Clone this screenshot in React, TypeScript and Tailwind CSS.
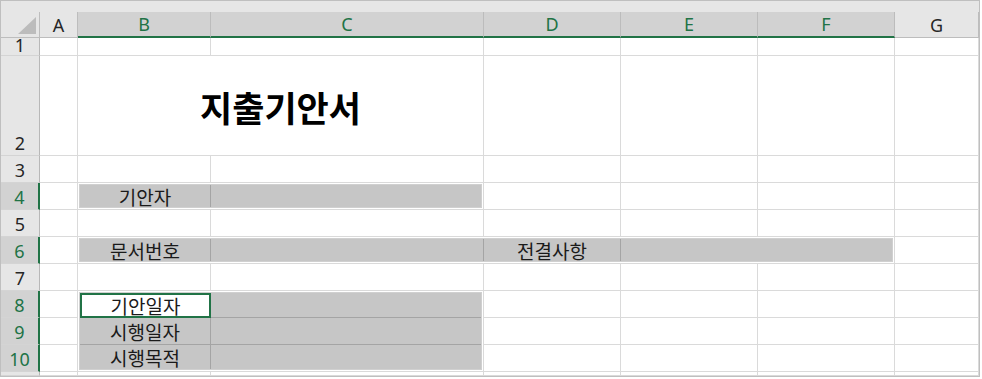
import clsx from "clsx"

const GREEN = "#217346"

// Columns A..G. Selected columns B..F.
const COLUMNS: { label: string; active: boolean }[] = [
  { label: "A", active: false },
  { label: "B", active: true },
  { label: "C", active: true },
  { label: "D", active: true },
  { label: "E", active: true },
  { label: "F", active: true },
  { label: "G", active: false },
]

function ColHead({ label, active }: { label: string; active: boolean }) {
  return (
    <div
      className={clsx(
        "flex items-center justify-center border-r text-[18px] leading-none",
        active
          ? "bg-[#d2d2d2] text-[#217346] border-b-2 border-b-[#217346] border-r-[#bcbcbc]"
          : "bg-[#e6e6e6] text-[#262626] border-b border-b-[#bdbdbd] border-r-[#bdbdbd]"
      )}
    >
      {label}
    </div>
  )
}

function RowHead({ n, active, pad = "pb-[3px]" }: { n?: string; active?: boolean; pad?: string }) {
  return (
    <div
      className={clsx(
        "flex items-end justify-center overflow-hidden border-b border-b-[#d4d4d4] text-[18px] leading-none",
        pad,
        active
          ? "bg-[#d2d2d2] text-[#217346] border-r-2 border-r-[#217346]"
          : "bg-[#e6e6e6] text-[#262626] border-r border-r-[#b8b8b8]"
      )}
    >
      {n}
    </div>
  )
}

function Cell({ className, children }: { className?: string; children?: React.ReactNode }) {
  return <div className={clsx("border-r border-b border-[#dadada]", className)}>{children}</div>
}

function Label({ children }: { children: React.ReactNode }) {
  return (
    <span className="font-['Noto_Sans_CJK_KR',sans-serif] text-[19px] leading-none text-[#1a1a1a]">
      {children}
    </span>
  )
}

export default function App() {
  return (
    <div className="w-[982px] h-[379px] bg-white font-['Noto_Sans','Noto_Sans_CJK_KR',sans-serif]">
      <div className="w-[980px] h-[377px] border border-[#bfbfbf] flex flex-col overflow-hidden">
        {/* strip above the column headers */}
        <div className="h-[11px] shrink-0 bg-[#e6e6e6]" />

        <div className="flex-1 grid grid-cols-[39px_38px_133px_273px_137px_137px_137px_1fr] grid-rows-[26px_18px_100px_repeat(8,27px)_1fr]">
          {/* header row */}
          <div className="flex items-end justify-end bg-[#e6e6e6] border-r border-b border-[#bdbdbd] pr-[3px] pb-[3px]">
            <svg width="18" height="17" viewBox="0 0 18 17">
              <polygon points="18,0 18,17 0,17" fill="#bcbcbc" />
            </svg>
          </div>
          {COLUMNS.map((c) => (
            <ColHead key={c.label} label={c.label} active={c.active} />
          ))}

          {/* row 1 (clipped) */}
          <RowHead n="1" pad="pb-[1px]" />
          <Cell />
          <Cell />
          <Cell />
          <Cell />
          <Cell />
          <Cell />
          <Cell />

          {/* row 2: title merged over B:C */}
          <RowHead n="2" />
          <Cell />
          <Cell className="col-span-2 flex items-center justify-center pt-[2px]">
            <span className="font-['Noto_Sans_CJK_KR',sans-serif] text-[35px] font-bold leading-none text-black">
              지출기안서
            </span>
          </Cell>
          <Cell />
          <Cell />
          <Cell />
          <Cell />

          {/* row 3 */}
          <RowHead n="3" />
          <Cell />
          <Cell />
          <Cell />
          <Cell />
          <Cell />
          <Cell />
          <Cell />

          {/* row 4: 기안자 */}
          <RowHead n="4" active />
          <Cell />
          <Cell className="col-span-2">
            <div className="h-full p-px bg-white">
              <div className="h-full flex border border-[#d0d0d0] bg-[#c6c6c6]">
                <div className="w-[131px] flex items-center justify-center border-r border-[#a4a4a4]">
                  <Label>기안자</Label>
                </div>
                <div className="flex-1" />
              </div>
            </div>
          </Cell>
          <Cell />
          <Cell />
          <Cell />
          <Cell />

          {/* row 5 */}
          <RowHead n="5" />
          <Cell />
          <Cell />
          <Cell />
          <Cell />
          <Cell />
          <Cell />
          <Cell />

          {/* row 6: 문서번호 / 전결사항 */}
          <RowHead n="6" active />
          <Cell />
          <Cell className="col-span-5">
            <div className="h-full p-px bg-white">
              <div className="h-full flex border border-[#d0d0d0] bg-[#c6c6c6]">
                <div className="w-[131px] flex items-center justify-center border-r border-[#a4a4a4]">
                  <Label>문서번호</Label>
                </div>
                <div className="w-[273px] border-r border-[#a4a4a4]" />
                <div className="w-[137px] flex items-center justify-center border-r border-[#a4a4a4]">
                  <Label>전결사항</Label>
                </div>
                <div className="flex-1" />
              </div>
            </div>
          </Cell>
          <Cell />

          {/* row 7 */}
          <RowHead n="7" />
          <Cell />
          <Cell />
          <Cell />
          <Cell />
          <Cell />
          <Cell />
          <Cell />

          {/* rows 8–10: block B8:C10 */}
          <RowHead n="8" active />
          <Cell />
          <Cell className="col-span-2 row-span-3">
            <div className="h-full p-px bg-white">
              <div className="h-full grid grid-cols-[131px_1fr] grid-rows-[25px_27px_1fr] border border-[#d0d0d0] bg-[#c6c6c6]">
                <div className="flex items-center justify-center bg-white border-2" style={{ borderColor: GREEN }}>
                  <Label>기안일자</Label>
                </div>
                <div className="border-b border-[#a4a4a4]" />
                <div className="flex items-center justify-center border-r border-b border-[#a4a4a4]">
                  <Label>시행일자</Label>
                </div>
                <div className="border-b border-[#a4a4a4]" />
                <div className="flex items-center justify-center border-r border-[#a4a4a4]">
                  <Label>시행목적</Label>
                </div>
                <div />
              </div>
            </div>
          </Cell>
          <Cell />
          <Cell />
          <Cell />
          <Cell />

          <RowHead n="9" active />
          <Cell />
          <Cell />
          <Cell />
          <Cell />
          <Cell />

          <RowHead n="10" active />
          <Cell />
          <Cell />
          <Cell />
          <Cell />
          <Cell />

          {/* row 11 (clipped) */}
          <RowHead />
          <Cell />
          <Cell />
          <Cell />
          <Cell />
          <Cell />
          <Cell />
          <Cell />
        </div>
      </div>
    </div>
  )
}
